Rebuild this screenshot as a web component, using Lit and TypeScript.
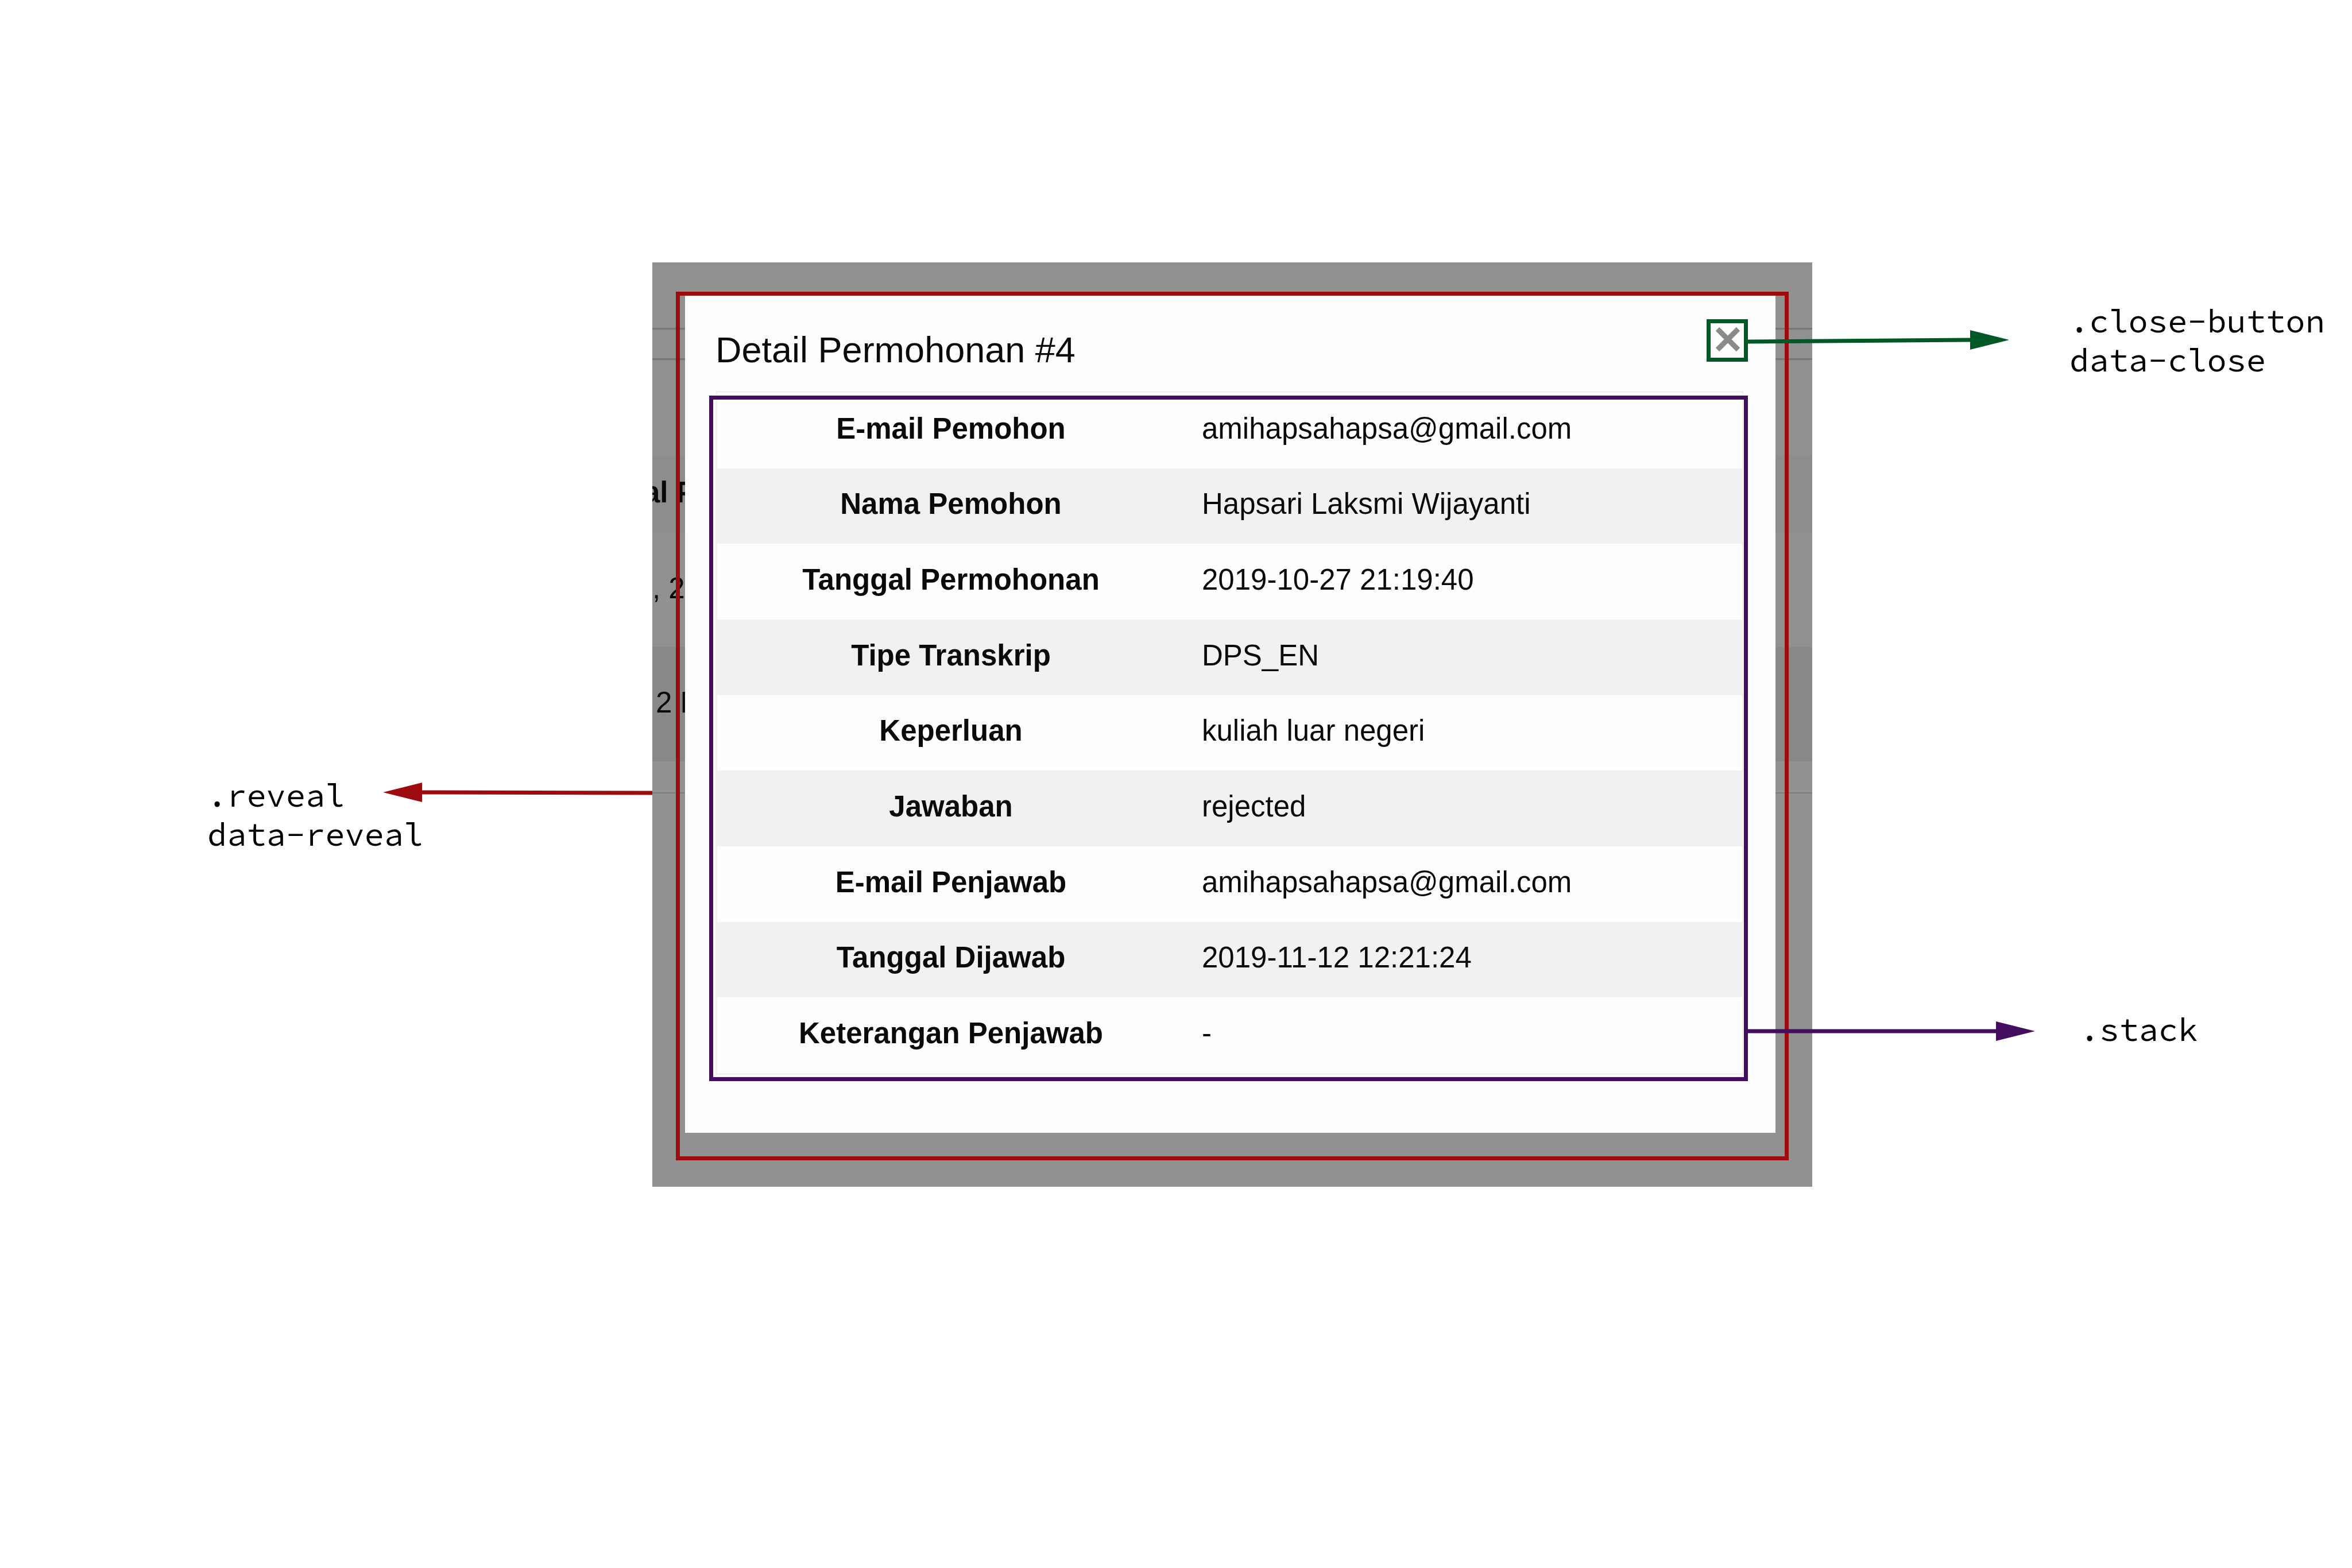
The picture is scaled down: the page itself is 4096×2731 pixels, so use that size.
import { LitElement, html, svg, css } from "lit";
import { customElement, property } from "lit/decorators.js";

interface Detail {
  label: string;
  value: string;
}

const DETAILS: Detail[] = [
  { label: "E-mail Pemohon", value: "amihapsahapsa@gmail.com" },
  { label: "Nama Pemohon", value: "Hapsari Laksmi Wijayanti" },
  { label: "Tanggal Permohonan", value: "2019-10-27 21:19:40" },
  { label: "Tipe Transkrip", value: "DPS_EN" },
  { label: "Keperluan", value: "kuliah luar negeri" },
  { label: "Jawaban", value: "rejected" },
  { label: "E-mail Penjawab", value: "amihapsahapsa@gmail.com" },
  { label: "Tanggal Dijawab", value: "2019-11-12 12:21:24" },
  { label: "Keterangan Penjawab", value: "-" },
];

/** Arrow from a highlighted frame to its label; `drop` is how far the tail sits below the tip. */
@customElement("note-arrow")
class NoteArrow extends LitElement {
  @property({ type: Number }) length = 400;
  @property({ type: Number }) drop = 0;
  @property({ type: Boolean }) left = false;

  static styles = css`
    :host {
      display: block;
      flex: none;
    }
    .arrow {
      display: block;
      fill: currentColor;
      stroke: currentColor;
    }
  `;

  render() {
    const w = this.length;
    const tip = this.left ? 0 : w;
    const base = this.left ? 68 : w - 68;
    const tail = this.left ? w : 0;
    const shape = svg`
      <line x1=${tail} y1=${18 + this.drop} x2=${base} y2="18" stroke-width="7"></line>
      <polygon points="${base},1 ${tip},18 ${base},35" stroke="none"></polygon>`;
    return html`<svg class="arrow" width=${w} height="36" viewBox="0 0 ${w} 36" aria-hidden="true">${shape}</svg>`;
  }
}

/** Modal with the details of one request, shown over the dimmed list page. */
@customElement("detail-modal")
class DetailModal extends LitElement {
  static styles = css`
    :host {
      display: block;
      position: relative;
      background: #919191;
      padding: 51px 41px 46px;
      font-family: "Liberation Sans", Arial, sans-serif;
      font-size: 51px;
      line-height: 64px;
      color: #0a0a0a;
    }
    .backdrop {
      position: absolute;
      inset: 0;
      overflow: hidden;
      padding-top: 114px;
    }
    .toolbar {
      height: 50px;
      border: solid #777;
      border-width: 3px 0;
      margin-bottom: 166px;
    }
    .line {
      display: flex;
      align-items: center;
      box-sizing: border-box;
      height: 199px;
      padding-bottom: 6px;
      white-space: pre;
    }
    .line.head {
      height: 135px;
      background: #8c8c8c;
      font-weight: bold;
      text-indent: -15px;
    }
    .line.odd {
      background: #888;
      padding-left: 6px;
    }
    .rule {
      height: 2px;
      margin-top: 54px;
      background: #7c7c7c;
    }
    .reveal {
      position: relative;
      border: 7px solid #9d0b0e;
      padding: 0 16px 41px 9px;
    }
    .modal {
      background: #fefefe;
      padding: 41px 48px 101px 53px;
    }
    .header {
      display: flex;
      align-items: flex-start;
      justify-content: space-between;
    }
    .title {
      margin: 17px 0 0;
      font-size: 63px;
      line-height: 72px;
      font-weight: normal;
    }
    .close-button {
      display: flex;
      align-items: center;
      justify-content: center;
      box-sizing: border-box;
      width: 72px;
      height: 74px;
      padding: 0 0 5px 2px;
      border: 7px solid #005826;
      background: none;
      color: #8a8a8a;
      cursor: pointer;
    }
    .cross {
      width: 44px;
      height: 44px;
      flex: none;
    }
    .stack {
      position: relative;
      margin: 36px 7px 0 0;
    }
    .frame {
      position: absolute;
      inset: 8px -7px -11px -11px;
      border: 7px solid #450d60;
      pointer-events: none;
    }
    .details {
      width: 100%;
      height: 1191px;
      table-layout: fixed;
      border-collapse: separate;
      border-spacing: 0;
      border: 3px solid #f1f1f1;
    }
    .details tr:nth-child(even) {
      background: #f1f1f1;
    }
    .details th,
    .details td {
      padding: 0 30px 6px;
      text-align: left;
      vertical-align: middle;
    }
    .details th {
      width: 754px;
      text-align: center;
      font-weight: bold;
    }
  `;

  render() {
    return html`
      <div class="backdrop">
        <div class="toolbar"></div>
        <div class="line head">al P</div>
        <div class="line">, 2</div>
        <div class="line odd">2 N</div>
        <div class="rule"></div>
      </div>
      <section class="reveal">
        <div class="modal">
          <header class="header">
            <h1 class="title">Detail Permohonan #4</h1>
            <button class="close-button" type="button" aria-label="Close">
              <svg class="cross" viewBox="0 0 44 44" aria-hidden="true">
                <path d="M4 4L40 40M40 4L4 40" stroke="currentColor" stroke-width="9" fill="none"></path>
              </svg>
            </button>
          </header>
          <div class="stack">
            <table class="details">
              <tbody>
                ${DETAILS.map(
                  (d) => html`<tr>
                    <th scope="row">${d.label}</th>
                    <td>${d.value}</td>
                  </tr>`
                )}
              </tbody>
            </table>
            <div class="frame"></div>
          </div>
        </div>
      </section>
    `;
  }
}

@customElement("app-root")
class AppRoot extends LitElement {
  static styles = css`
    :host {
      display: block;
      background: #fff;
    }
    .page {
      display: grid;
      grid-template-columns: minmax(0, 1136fr) minmax(0, 2020fr) minmax(0, 940fr);
      align-items: start;
      box-sizing: border-box;
      min-height: 100vh;
      padding-top: 457px;
    }
    .notes {
      position: relative;
      color: #000;
      font-family: "Source Code Pro", "Noto Sans Mono CJK JP", "DejaVu Sans Mono", monospace;
      font-size: 57px;
      line-height: 68px;
      white-space: nowrap;
    }
    .notes.before {
      padding: 894px 0 0 361px;
    }
    .notes.after {
      margin-left: -113px;
      padding-top: 68px;
    }
    .note {
      display: flex;
      align-items: flex-start;
    }
    .before .note {
      justify-content: space-between;
    }
    .close {
      gap: 105px;
    }
    .table {
      gap: 78px;
      margin-top: 1098px;
    }
    .label {
      margin: 0;
    }
    .red {
      color: #9d0b0e;
      margin: 11px 0 0 -72px;
    }
    .green {
      color: #005826;
      margin-top: 49px;
    }
    .purple {
      color: #450d60;
      margin-top: 19px;
    }
  `;

  render() {
    return html`
      <main class="page">
        <aside class="notes before">
          <div class="note">
            <p class="label">.reveal<br />data-reveal</p>
            <note-arrow class="red" length="469" drop="1" left></note-arrow>
          </div>
        </aside>
        <detail-modal></detail-modal>
        <aside class="notes after">
          <div class="note close">
            <note-arrow class="green" length="456" drop="3"></note-arrow>
            <p class="label">.close-button<br />data-close</p>
          </div>
          <div class="note table">
            <note-arrow class="purple" length="501"></note-arrow>
            <p class="label">.stack</p>
          </div>
        </aside>
      </main>
    `;
  }
}
